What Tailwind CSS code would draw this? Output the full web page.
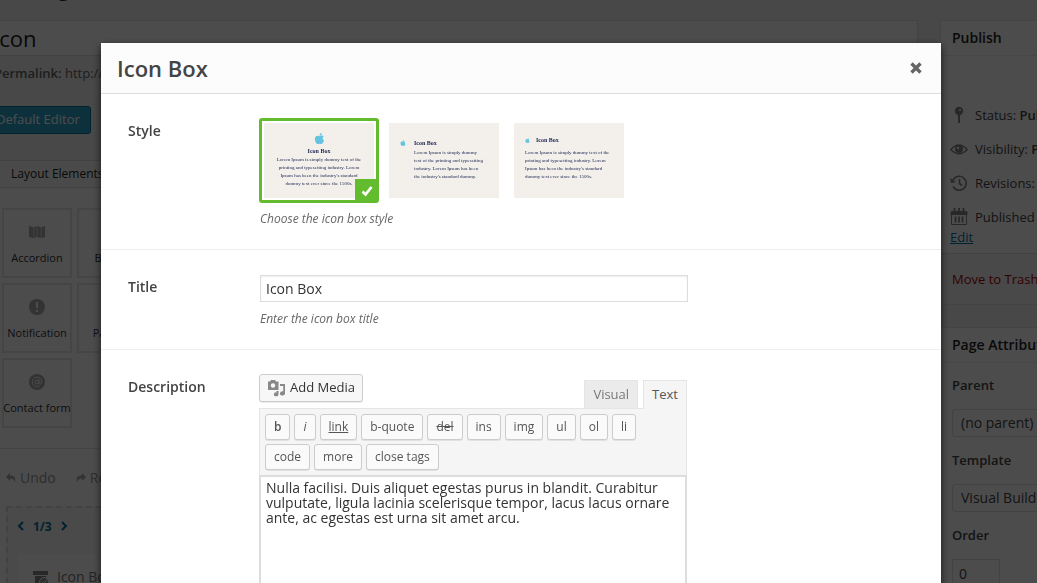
<!DOCTYPE html>
<html lang="en">
<head>
<meta charset="utf-8">
<meta name="viewport" content="width=device-width, initial-scale=1">
<title>Icon Box</title>
<script src="https://cdn.jsdelivr.net/npm/@tailwindcss/browser@4"></script>
</head>
<body class="h-screen overflow-hidden bg-[#f1f1f1] font-['Open_Sans',sans-serif] text-[13px] text-[#333]">

<!-- Editor page -->
<div class="flex h-full gap-[22px] overflow-hidden whitespace-nowrap">
  <main class="-ml-5 min-w-0 flex-1">
    <div class="flex h-5 items-end overflow-hidden pl-1"><h1 class="mb-[18px] text-[23px] leading-8 text-[#222]">Edit Page</h1></div>
    <input aria-label="Page title" value="Icon" class="block h-9 w-full border border-[#ddd] bg-white px-3 text-[22px] text-[#222]">
    <p class="h-[50px] px-3.5 pt-[9px] leading-4 text-[#666]"><strong class="font-semibold">Permalink:</strong> http://</p>
    <button class="ml-px block h-[28px] rounded-[3px] border border-[#0074a2] bg-[#2ea2cc] px-2.5 pl-[14px] text-white">Default Editor</button>
    <section class="mt-[26px] border border-[#ddd] bg-white">
      <div class="flex h-[27px] items-center border-b border-[#ddd] bg-[#f8f8f8] pl-[30px] text-xs text-[#222]">Layout Elements</div>
      <div class="grid grid-cols-[70px_70px] gap-[5px] py-5 pl-[21px] text-[11px]">
        <button class="flex h-[70px] flex-col items-center gap-2 border-2 border-[#e8e8e8] pt-3">
          <svg class="size-5 fill-[#aaa]" viewBox="0 0 20 20" aria-hidden="true"><path d="M2 4l4.600 1.200v11L2 15zM7.200 5.200l2.600-1.200v11l-2.600 1.200zM10.400 4l3.400 1.200v11L10.400 15zM14.400 5.200L18 4v11l-3.600 1.200z"/></svg>Accordion</button>
        <button class="flex h-[70px] flex-col items-center gap-2 border-2 border-[#e8e8e8] pt-3"><span class="size-5"></span>Button</button>
        <button class="flex h-[70px] flex-col items-center gap-2 border-2 border-[#e8e8e8] pt-3">
          <svg class="size-5" viewBox="0 0 20 20" aria-hidden="true"><circle cx="10" cy="10" r="8" fill="#aaa"/><path d="M10 5v6M10 13v2" stroke="#fff" stroke-width="2.2"/></svg>Notification</button>
        <button class="flex h-[70px] flex-col items-center gap-2 border-2 border-[#e8e8e8] pt-3"><span class="size-5"></span>Partner</button>
        <button class="flex h-[70px] flex-col items-center gap-2 border-2 border-[#e8e8e8] pt-3">
          <svg class="size-5" viewBox="0 0 20 20" fill="none" aria-hidden="true"><circle cx="10" cy="10" r="8" fill="#aaa"/><circle cx="10" cy="10" r="2" stroke="#fff"/><path d="M12 7.800v3c0 1.700 2.800 1.500 2.800-.8a4.800 4.800 0 1 0-2 3.900" stroke="#fff" stroke-width=".9"/></svg>Contact form</button>
      </div>
      <div class="flex h-[58px] items-center gap-5 border-t border-[#e5e5e5] pl-[25px] text-sm text-[#999]">
        <button class="flex items-center gap-1"><svg class="h-2.5 w-2.5 fill-[#aaa]" viewBox="0 0 10 10" aria-hidden="true"><path d="M0 4l4-4v2.500c4 0 6 1 5 7C8 6.500 7 5.500 4 5.500V8z"/></svg>Undo</button>
        <button class="flex items-center gap-1"><svg class="h-2.5 w-2.5 fill-[#aaa]" viewBox="0 0 10 10" aria-hidden="true"><path d="M10 4L6 0v2.500c-4 0-6 1-5 7C2 6.500 3 5.500 6 5.500V8z"/></svg>Redo</button>
      </div>
      <div class="ml-[25px] h-40 border-2 border-dashed border-[#ddd] bg-[#f8f8f8] pl-2.5">
        <div class="-ml-0.5 flex h-[46px] items-start gap-[7px] pt-[9px] font-bold text-[#0074a2]">
          <button aria-label="Previous" class="mt-1"><svg class="size-2.5" viewBox="0 0 10 10" fill="none" stroke="#0074a2" stroke-width="2"><path d="M7 1L3 5l4 4"/></svg></button>
          <span class="text-xs leading-5">1/3</span>
          <button aria-label="Next" class="mt-1"><svg class="size-2.5" viewBox="0 0 10 10" fill="none" stroke="#0074a2" stroke-width="2"><path d="M3 1l4 4-4 4"/></svg></button>
        </div>
        <div class="flex h-20 gap-2 bg-white pl-[15px] pt-[13px] text-sm text-[#777]">
          <svg class="mt-1 size-4" viewBox="0 0 16 16" aria-hidden="true"><path d="M0 0h15v4H0zM2 5h11v4l-3 7H2z" fill="#888"/><circle cx="11" cy="11" r="4.500" fill="#999" stroke="#fff"/><path d="M9 11l1.500 1.500L13.500 9.500" fill="none" stroke="#fff"/></svg>Icon Box
        </div>
      </div>
    </section>
  </main>

  <aside class="-mr-[183px] w-[280px] shrink-0 pt-5 text-[#444]">
    <section class="border border-[#e5e5e5] bg-white">
      <h2 class="flex h-[35px] items-center border-b border-[#eee] pl-[11px] text-sm font-semibold text-[#222]">Publish</h2>
      <ul class="flex flex-col gap-3.5 pl-[9px] pt-[49px] leading-5">
        <li class="flex items-center gap-[7px]"><svg class="size-[18px]" viewBox="0 0 18 18" aria-hidden="true"><circle cx="9" cy="5" r="4.200" fill="#888"/><path d="M9 8v9" stroke="#888" stroke-width="2"/><circle cx="10" cy="4" r="1.100" fill="#fff"/></svg><span>Status: <b class="font-semibold">Published</b></span></li>
        <li class="flex items-center gap-[7px]"><svg class="size-[18px]" viewBox="0 0 18 18" aria-hidden="true"><path d="M.7 9.500Q9 .5 17.300 9.500Q9 18 .7 9.500z" fill="none" stroke="#888" stroke-width="1.300"/><circle cx="9" cy="9" r="4" fill="#888"/><circle cx="8" cy="8" r="1.200" fill="#fff"/></svg><span>Visibility: <b class="font-semibold">Public</b></span></li>
        <li class="flex items-center gap-[7px]"><svg class="size-[18px]" viewBox="0 0 18 18" fill="none" stroke="#888" stroke-width="1.700" aria-hidden="true"><path d="M3 6a7 7 0 1 1 0 6.500M9.500 5v4.500l2.500 2"/><path d="M0 4l1 5 5-1z" fill="#888" stroke="none"/></svg><span>Revisions: <b class="font-semibold">3</b></span></li>
        <li><div class="flex items-center gap-[7px]"><svg class="size-[18px]" viewBox="0 0 18 18" fill="none" stroke="#888" aria-hidden="true"><path d="M1.500 3.500h15v13h-15z"/><path d="M1 4h16v2.500H1z" fill="#888"/><path d="M4.500 0v5M9 0v5M13.500 0v5M5.500 8.500v6M9 8.500v6M12.500 8.500v6" stroke-width="1.800"/></svg><span>Published on:</span></div><a href="#" class="text-[#0074a2] underline">Edit</a></li>
      </ul>
      <div class="mt-1.5 h-[51px] border-t border-[#ddd] bg-[#f5f5f5] pl-[11px] leading-[50px]"><a href="#" class="text-[#a00]">Move to Trash</a></div>
    </section>
    <section class="mt-[22px] border border-[#e5e5e5] bg-white pb-10">
      <h2 class="flex h-[35px] items-center border-b border-[#eee] pl-[11px] text-sm font-semibold text-[#222]">Page Attributes</h2>
      <div class="flex flex-col pl-[11px]">
        <label for="parent" class="mt-3 font-semibold leading-5">Parent</label>
        <select id="parent" class="mt-3.5 h-7 w-52 appearance-none rounded-[3px] border border-[#ddd] bg-white px-2 text-sm"><option>(no parent)</option></select>
        <label for="template" class="mt-[13px] font-semibold leading-5">Template</label>
        <select id="template" class="mt-3.5 h-7 w-52 appearance-none rounded-[3px] border border-[#ddd] bg-white px-2 text-sm"><option>Visual Builder</option></select>
        <label for="order" class="mt-[13px] font-semibold leading-5">Order</label>
        <input id="order" value="0" class="mt-3.5 h-7 w-12 border border-[#ddd] px-1.5 text-sm">
      </div>
    </section>
  </aside>
</div>

<!-- Modal -->
<div class="fixed inset-0 flex justify-center overflow-hidden bg-black/70 pl-[5px] pt-[43px]">
  <div role="dialog" aria-labelledby="dialog-title" class="min-h-full w-full max-w-[840px] self-start bg-white shadow-[0_3px_8px_rgba(0,0,0,0.7)]">
    <header class="flex h-[51px] items-center justify-between border-b border-[#ddd] bg-[#fcfcfc] pl-4 pr-[18px]">
      <h2 id="dialog-title" class="text-[22px] font-semibold text-[#444]">Icon Box</h2>
      <button aria-label="Close"><svg class="size-3.5" viewBox="0 0 14 14" aria-hidden="true"><path d="M2.500 2.500l9 9M11.500 2.500l-9 9" stroke="#666" stroke-width="3.400"/></svg></button>
    </header>

    <section class="grid grid-cols-[131px_minmax(0,1fr)] border-b border-[#eee] px-[27px] pb-5 pt-6">
      <h3 id="style-label" class="pt-[3px] text-sm font-semibold text-[#444]">Style</h3>
      <div>
        <div role="group" aria-labelledby="style-label" class="flex gap-[5px] font-['Liberation_Serif',serif] text-[5px] leading-2 text-[#232b55]">
          <button aria-pressed="true" class="relative h-[85px] w-[120px] rounded-[3px] border-3 border-[#62bc2e] p-0.5">
            <span class="flex h-full flex-col items-center whitespace-nowrap bg-[#f3f0eb] pt-2.5">
              <svg class="size-[11px] fill-[#63c3e0]" viewBox="0 0 12 12" aria-hidden="true"><path d="M6 3.500C8 2.300 10 2.600 10.500 4 9 5 9 7 11 8c-.8 2.500-2 4-3.300 4-.7 0-1-.4-1.700-.4s-1 .4-1.700.4C2.500 12 1 9 1 6.500 1 3 4 2.300 6 3.500zM6 3C6 1.200 7 .2 8.500 0 8.500 1.800 7.500 3 6 3z"/></svg>
              <b class="mt-[3px] text-[6px]">Icon Box</b>
              <span class="mt-px">Lorem Ipsum is simply dummy text of the<br>printing and typesetting industry. Lorem<br>Ipsum has been the industry's standard<br>dummy text ever since the 1500s.</span>
            </span>
            <span class="absolute -bottom-0.5 -right-0.5 flex size-[23px] items-center justify-center bg-[#62bc2e]"><svg class="size-3" viewBox="0 0 12 12" fill="none" aria-hidden="true"><path d="M1.500 6.500l3 3L10.500 2" stroke="#fff" stroke-width="2.800"/></svg></span>
          </button>
          <button aria-pressed="false" class="h-[85px] w-[120px] p-[5px]">
            <span class="flex h-full gap-2 whitespace-nowrap bg-[#f3f0eb] pl-[11px] pt-4 text-left">
              <svg class="mt-px size-[6px] fill-[#63c3e0]" viewBox="0 0 12 12" aria-hidden="true"><path d="M6 3.500C8 2.300 10 2.600 10.500 4 9 5 9 7 11 8c-.8 2.500-2 4-3.300 4-.7 0-1-.4-1.700-.4s-1 .4-1.700.4C2.500 12 1 9 1 6.500 1 3 4 2.300 6 3.500zM6 3C6 1.200 7 .2 8.500 0 8.500 1.800 7.500 3 6 3z"/></svg>
              <span><b class="block text-[6px]">Icon Box</b><span class="mt-0.5 block">Lorem Ipsum is simply dummy<br>text of the printing and typesetting<br>industry. Lorem Ipsum has been<br>the industry's standard dummy.</span></span>
            </span>
          </button>
          <button aria-pressed="false" class="h-[85px] w-[120px] p-[5px]">
            <span class="block h-full whitespace-nowrap bg-[#f3f0eb] pl-[11px] pt-[13px] text-left">
              <span class="flex items-center gap-[6px]"><svg class="size-[5px] fill-[#63c3e0]" viewBox="0 0 12 12" aria-hidden="true"><path d="M6 3.500C8 2.300 10 2.600 10.500 4 9 5 9 7 11 8c-.8 2.500-2 4-3.300 4-.7 0-1-.4-1.700-.4s-1 .4-1.700.4C2.500 12 1 9 1 6.500 1 3 4 2.300 6 3.500zM6 3C6 1.200 7 .2 8.500 0 8.500 1.800 7.500 3 6 3z"/></svg><b class="text-[6px]">Icon Box</b></span>
              <span class="mt-[5px] block">Lorem Ipsum is simply dummy text of the<br>printing and typesetting industry. Lorem<br>Ipsum has been the industry's standard<br>dummy text ever since the 1500s.</span>
            </span>
          </button>
        </div>
        <p class="ml-px mt-1.5 text-xs leading-5 italic text-[#666]">Choose the icon box style</p>
      </div>
    </section>

    <section class="grid grid-cols-[132px_minmax(0,1fr)] border-b border-[#eee] px-[27px] pb-5 pt-[25px]">
      <label for="title" class="pt-0.5 text-sm font-semibold text-[#444]">Title</label>
      <div>
        <input id="title" value="Icon Box" class="block h-[27px] w-full max-w-[428px] border border-[#ddd] px-[5px] text-sm text-[#333] shadow-[inset_0_1px_2px_rgba(0,0,0,0.07)]">
        <p class="mt-[7px] text-xs leading-5 italic text-[#666]">Enter the icon box title</p>
      </div>
    </section>

    <section class="grid grid-cols-[131px_minmax(0,1fr)] px-[27px] pt-6">
      <label for="description" class="pt-[3px] text-sm font-semibold text-[#444]">Description</label>
      <div class="max-w-[428px]">
        <div class="flex items-start">
          <button class="flex h-7 items-center gap-1 rounded-[3px] border border-[#ccc] bg-[#f7f7f7] px-[7px] text-[13px] text-[#333] shadow-[0_1px_0_rgba(0,0,0,0.08)]">
            <svg class="size-[19px]" viewBox="0 0 19 19" aria-hidden="true"><path d="M1 2.500h2L4 1h4l1 1.500h2.500V11H1z" fill="#888"/><circle cx="6" cy="6.500" r="2.200" fill="#f7f7f7"/><path d="M13 5h5v9.500a2.500 2 0 1 1-1.800-2V7H13z" fill="#888"/><path d="M9 12h2.500v3.500a2.300 2 0 1 1-1.300-2z" fill="#888"/></svg>Add Media</button>
          <div role="tablist" class="ml-auto mt-1.5 flex gap-[5px] text-[13px]">
            <button role="tab" aria-selected="false" class="h-7 border border-b-0 border-[#e5e5e5] bg-[#ebebeb] px-2 text-[#777]">Visual</button>
            <button role="tab" aria-selected="true" class="relative -mb-px h-[29px] border border-b-0 border-[#e5e5e5] bg-[#f5f5f5] px-2 text-[#555]">Text</button>
          </div>
        </div>
        <div class="flex flex-wrap gap-1 border border-b-0 border-[#e5e5e5] bg-[#f5f5f5] p-[5px] text-xs text-[#555] *:h-[26px] *:rounded-[3px] *:border *:border-[#ccc] *:bg-[#fafafa] *:px-2 *:shadow-[0_1px_0_rgba(0,0,0,0.08)]">
          <button class="font-semibold">b</button><button class="italic">i</button><button class="underline">link</button><button>b-quote</button><button class="line-through">del</button><button>ins</button><button>img</button><button>ul</button><button>ol</button><button>li</button><button>code</button><button>more</button><button>close tags</button>
        </div>
        <textarea id="description" class="block h-60 w-full resize-none border-2 border-[#ddd] px-[5px] py-[3px] text-sm leading-[15px] text-[#333]">Nulla facilisi. Duis aliquet egestas purus in blandit. Curabitur vulputate, ligula lacinia scelerisque tempor, lacus lacus ornare ante, ac egestas est urna sit amet arcu.</textarea>
      </div>
    </section>
  </div>
</div>
</body>
</html>
